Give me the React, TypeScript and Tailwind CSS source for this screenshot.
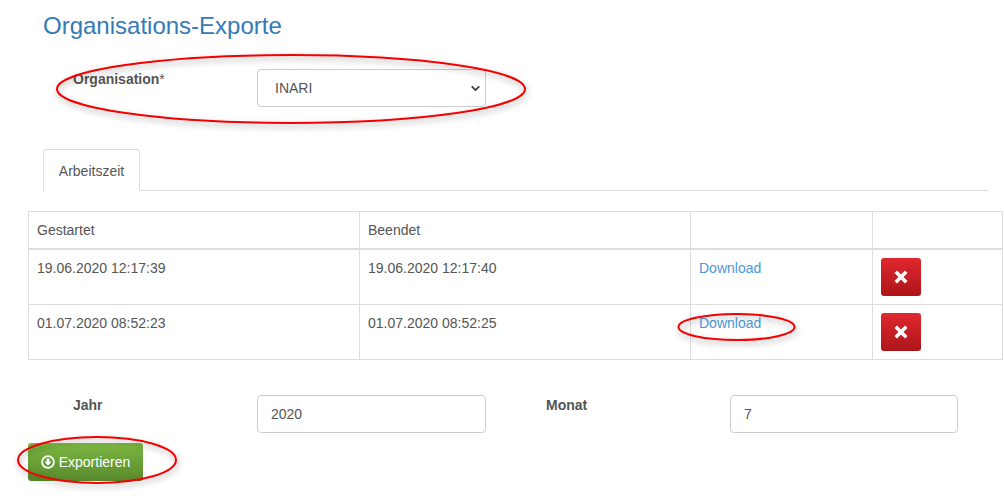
import { ChevronDown } from "lucide-react";

const font = "font-['Liberation_Sans',Arial,sans-serif]";

const rows = [
  { started: "19.06.2020 12:17:39", ended: "19.06.2020 12:17:40" },
  { started: "01.07.2020 08:52:23", ended: "01.07.2020 08:52:25" },
];

function DeleteButton() {
  return (
    <button className="flex h-[38px] w-10 items-center justify-center rounded-[3px] bg-gradient-to-b from-[#e0282f] to-[#ac1519]">
      <svg width="14" height="14" viewBox="0 0 14 14">
        <path d="M3 3 L11 11 M11 3 L3 11" stroke="#fff" strokeWidth="3.6" strokeLinecap="square" />
      </svg>
    </button>
  );
}

function TextInput({ value }: { value: string }) {
  return (
    <div className="flex h-[38px] items-center rounded border border-[#ccc] bg-white px-[13px] text-sm text-[#555]">
      {value}
    </div>
  );
}

export default function App() {
  return (
    <div className={`${font} relative h-[504px] w-[1004px] overflow-hidden bg-white text-sm text-[#555]`}>
      <div className="pl-[28px]">
        <h1 className="pl-[15px] pt-[11px] text-2xl leading-[30px] text-[#337ab7]">Organisations-Exporte</h1>

        {/* Organisation select */}
        <div className="mt-[28px] flex pl-[45px]">
          <label className="w-[184px] font-bold leading-5">
            Organisation<span className="font-normal">*</span>
          </label>
          <div className="flex h-[38px] w-[229px] items-center justify-between rounded border border-[#ccc] bg-white pl-[17px] pr-[3px]">
            <span>INARI</span>
            <ChevronDown size={13} strokeWidth={3.5} className="text-[#444]" />
          </div>
        </div>

        {/* Tabs */}
        <div className="ml-[15px] mt-[42px] w-[945px] border-b border-[#ddd]">
          <div className="-mb-px flex h-[42px] w-[97px] items-center justify-center rounded-t border border-b-0 border-[#ddd] bg-white">
            Arbeitszeit
          </div>
        </div>

        {/* Export table */}
        <div className="mt-5 w-[975px] border border-[#ddd]">
          <div className="grid h-[38px] grid-cols-[330px_331px_182px_1fr] border-b-2 border-[#ddd] leading-5">
            <div className="px-2 py-2">Gestartet</div>
            <div className="border-l border-[#ddd] px-2 py-2">Beendet</div>
            <div className="border-l border-[#ddd]" />
            <div className="border-l border-[#ddd]" />
          </div>
          {rows.map((row, i) => (
            <div
              key={row.started}
              className={`grid grid-cols-[330px_331px_182px_1fr] leading-5 ${i > 0 ? "h-[55px] border-t border-[#ddd]" : "h-[54px]"}`}
            >
              <div className="px-2 pt-2">{row.started}</div>
              <div className="border-l border-[#ddd] px-2 pt-2">{row.ended}</div>
              <div className="border-l border-[#ddd] px-2 pt-2 text-[#4a98dc]">Download</div>
              <div className="border-l border-[#ddd] px-2 pt-2">
                <DeleteButton />
              </div>
            </div>
          ))}
        </div>

        {/* Year and month */}
        <div className="mt-[35px] flex">
          <label className="w-[229px] pl-[45px] font-bold leading-5">Jahr</label>
          <div className="w-[229px]">
            <TextInput value="2020" />
          </div>
          <label className="ml-[60px] w-[184px] font-bold leading-5">Monat</label>
          <div className="w-[228px]">
            <TextInput value="7" />
          </div>
        </div>

        <button className="mt-[10px] flex h-[38px] w-[115px] items-center justify-center gap-[4px] rounded-[3px] bg-gradient-to-b from-[#7db843] to-[#588a2c] text-white">
          <svg width="14" height="14" viewBox="0 0 14 14">
            <circle cx="7" cy="7" r="5.9" fill="none" stroke="#fff" strokeWidth="1.8" />
            <path d="M5.6 3.6h2.8v3.2h2L7 10.5 3.6 6.8h2z" fill="#fff" />
          </svg>
          Exportieren
        </button>
      </div>

      {/* Red annotation ellipses drawn over the screenshot */}
      <svg className="pointer-events-none absolute inset-0" width="1004" height="504">
        <defs>
          <filter id="annotationShadow" x="-10%" y="-30%" width="120%" height="170%">
            <feDropShadow dx="1" dy="3" stdDeviation="3" floodColor="#000" floodOpacity="0.35" />
          </filter>
        </defs>
        <g fill="none" stroke="#f50000" strokeWidth="2" filter="url(#annotationShadow)">
          <ellipse cx="291" cy="89" rx="234" ry="34" />
          <ellipse cx="736.5" cy="327" rx="58" ry="13" />
          <ellipse cx="97" cy="460" rx="79" ry="23" />
        </g>
      </svg>
    </div>
  );
}
